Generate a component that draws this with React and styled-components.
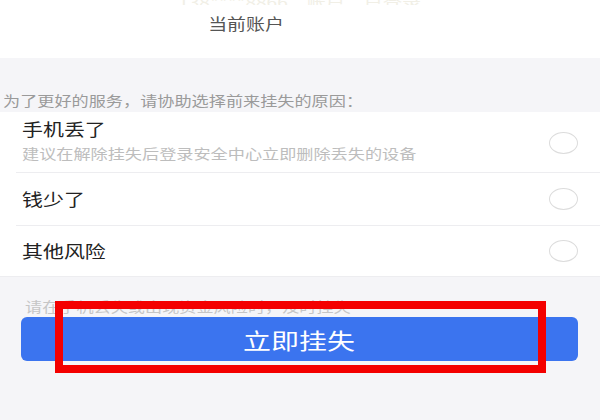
import React from "react";
import styled, { createGlobalStyle } from "styled-components";

const SX = 1.27;

const Global = createGlobalStyle`
  html, body { margin: 0; padding: 0; }
  body {
    background: #f5f5f8;
    font-family: "Noto Sans CJK SC", "Noto Sans", sans-serif;
    width: 600px;
    height: 420px;
    overflow: hidden;
  }
`;

const Page = styled.div`
  width: 600px;
  height: 420px;
  display: flex;
  flex-direction: column;
  background: #f5f5f8;
`;

const Header = styled.header`
  height: 58px;
  background: #ffffff;
  display: flex;
  flex-direction: column;
  align-items: center;
`;

const FaintLine = styled.div`
  height: 5px;
  width: 100%;
  overflow: hidden;
  display: flex;
  justify-content: center;
  align-items: flex-end;
`;

const Stretch = styled.span`
  display: inline-block;
  white-space: nowrap;
  transform: scaleX(${(p) => p.$sx || SX});
  transform-origin: ${(p) => (p.$center ? "center" : "left")} center;
`;

const FaintText = styled(Stretch)`
  font-size: 15px;
  line-height: 19px;
  color: #f1efe6;
  margin-bottom: -6px;
`;

const Title = styled.div`
  margin-top: 8px;
  padding-right: 108px;
  font-size: 15.5px;
  line-height: 20px;
  color: #555555;
`;

const Hint = styled.div`
  margin-top: 33px;
  padding-left: 3px;
  font-size: 13.5px;
  line-height: 18px;
  color: #9a9a9a;
`;

const List = styled.ul`
  list-style: none;
  margin: 3px 0 0;
  padding: 0;
  background: #ffffff;
  border-bottom: 1px solid #ededf0;
`;

const Row = styled.li`
  height: ${(p) => p.$h}px;
  box-sizing: border-box;
  margin-left: 16px;
  padding: ${(p) => (p.$top ? `${p.$top}px` : "0")} 22px 0 6px;
  display: flex;
  align-items: ${(p) => (p.$top ? "flex-start" : "center")};
  justify-content: space-between;
  border-bottom: ${(p) => (p.$last ? "none" : "1px solid #ededf0")};
`;

const RowText = styled.div`
  display: flex;
  flex-direction: column;
  gap: 4px;
`;

const RowTitle = styled.div`
  font-size: 16.5px;
  line-height: 22px;
  color: #222222;
`;

const RowSub = styled.div`
  font-size: 13.5px;
  line-height: 18px;
  color: #bdbdbd;
`;

const Radio = styled.span`
  flex: none;
  width: 27px;
  height: 20px;
  border: 1.5px solid #dcdcdc;
  border-radius: 50%;
  align-self: center;
  margin-top: ${(p) => (p.$top ? `-${p.$top - 1}px` : "0")};
`;

const Bottom = styled.section`
  position: relative;
  flex: 1;
  padding: 20px 22px 0 21px;
  display: flex;
  flex-direction: column;
`;

const Notice = styled.div`
  padding-left: 4px;
  font-size: 13.5px;
  line-height: 18px;
  color: #c6c6c6;
`;

const Button = styled.button`
  margin-top: 2px;
  height: 44px;
  width: 100%;
  border: none;
  border-radius: 6px;
  background: #3b74ef;
  color: #ffffff;
  font-family: inherit;
  font-size: 22px;
  line-height: 44px;
  padding: 0;
  display: flex;
  align-items: center;
  justify-content: center;
`;

const Highlight = styled.div`
  position: absolute;
  left: 55px;
  top: 24px;
  width: 491px;
  height: 72px;
  box-sizing: border-box;
  border: 8px solid #f40000;
  pointer-events: none;
`;

const reasons = [
  { title: "手机丢了", sub: "建议在解除挂失后登录安全中心立即删除丢失的设备", h: 61, top: 6 },
  { title: "钱少了", h: 53 },
  { title: "其他风险", h: 50, last: true },
];

export default function App() {
  return (
    <Page>
      <Global />
      <Header>
        <FaintLine>
          <FaintText $center>138****8866　账户　已登录</FaintText>
        </FaintLine>
        <Title>
          <Stretch $center $sx={1.22}>当前账户</Stretch>
        </Title>
      </Header>
      <Hint>
        <Stretch>为了更好的服务，请协助选择前来挂失的原因：</Stretch>
      </Hint>
      <List>
        {reasons.map((r) => (
          <Row key={r.title} $h={r.h} $top={r.top} $last={r.last}>
            <RowText>
              <RowTitle>
                <Stretch>{r.title}</Stretch>
              </RowTitle>
              {r.sub && (
                <RowSub>
                  <Stretch>{r.sub}</Stretch>
                </RowSub>
              )}
            </RowText>
            <Radio $top={r.top ? 6 : 0} />
          </Row>
        ))}
      </List>
      <Bottom>
        <Notice>
          <Stretch>请在手机丢失或出现资金风险时，及时挂失</Stretch>
        </Notice>
        <Button>
          <Stretch $center>立即挂失</Stretch>
        </Button>
        <Highlight />
      </Bottom>
    </Page>
  );
}
